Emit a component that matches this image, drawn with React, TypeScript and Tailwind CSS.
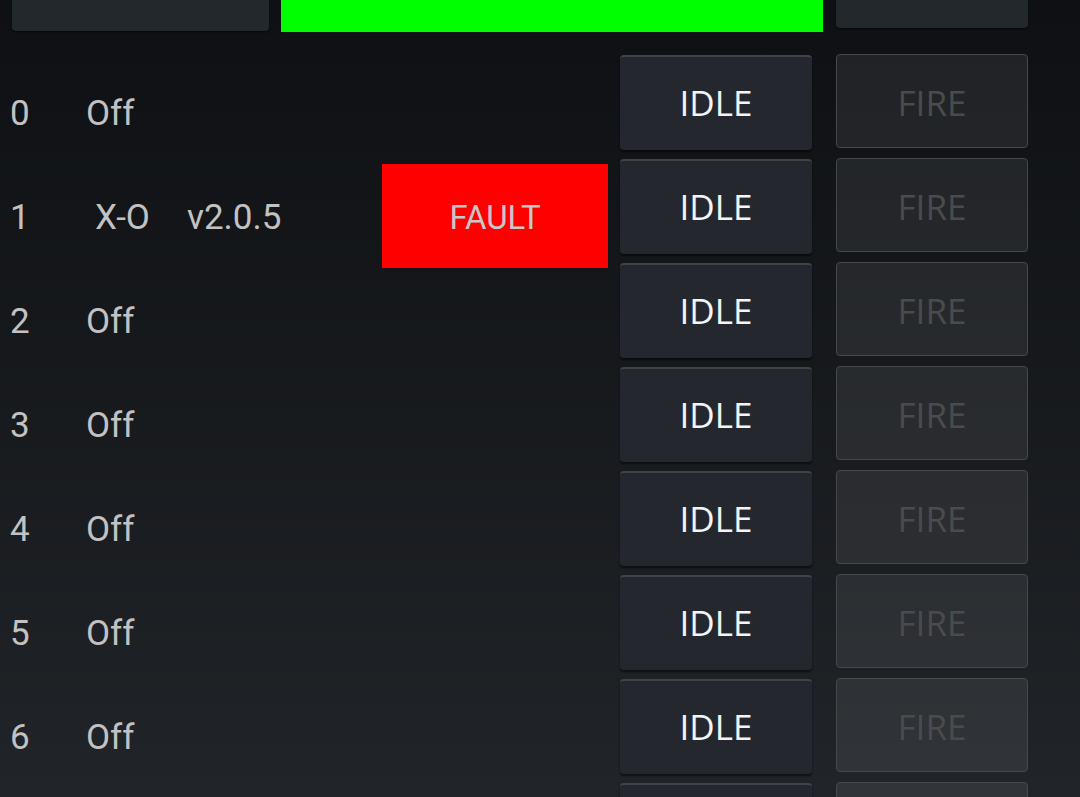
const rows = [
  { id: 0, name: 'Off' },
  { id: 1, name: 'X-O', version: 'v2.0.5', fault: true },
  { id: 2, name: 'Off' },
  { id: 3, name: 'Off' },
  { id: 4, name: 'Off' },
  { id: 5, name: 'Off' },
  { id: 6, name: 'Off' },
  { id: 7, name: 'Off' },
];

export default function App() {
  return (
    <div className="h-[797px] w-[1080px] overflow-hidden bg-gradient-to-b from-[#0e1013] to-[#212428] font-['Roboto',sans-serif]">
      <div className="flex items-start h-[60px]">
        <div className="ml-3 w-[257px] h-[31px] rounded-b-[4px] bg-[#23282d] shadow-[0_1px_2px_rgba(0,0,0,0.6)]" />
        <div className="ml-3 w-[542px] h-[32px] bg-[#00ff00]" />
        <div className="ml-[13px] w-[192px] h-[28px] rounded-b-[4px] bg-[#23282d] shadow-[0_1px_2px_rgba(0,0,0,0.6)]" />
      </div>
      {rows.map(r => (
        <div key={r.id} className="flex items-start h-[104px] shrink-0">
          <div className="w-[86px] h-[104px] pl-[10px] pt-[5px] flex items-center text-[35px] text-[#c2c2c2]">{r.id}</div>
          <div className={`w-[101px] h-[104px] pt-[5px] flex items-center text-[35px] text-[#c2c2c2] ${r.version ? 'pl-[9px]' : ''}`}>{r.name}</div>
          <div className="w-[195px] h-[104px] pt-[5px] flex items-center text-[35px] text-[#c2c2c2]">{r.version}</div>
          <div className="w-[226px] h-[104px]">
            {r.fault && (
              <div className="h-full pt-[3px] bg-[#ff0000] flex items-center justify-center text-[33px] text-[#c8c8c8]">FAULT</div>
            )}
          </div>
          <button className="ml-3 -mt-[5px] w-[192px] h-[95px] rounded-[4px] bg-[#24282e] border-t-2 border-[#3f4449] shadow-[0_2px_2px_rgba(0,0,0,0.55)] flex items-center justify-center font-['Open_Sans',sans-serif] text-[35px] text-[#f4f4f4]">
            IDLE
          </button>
          <button className="ml-6 -mt-[6px] w-[192px] h-[94px] pt-[4px] rounded-[4px] bg-white/[0.075] border border-[#46494c] flex items-center justify-center font-['Open_Sans',sans-serif] text-[35px] text-[#4b4b4b]">
            FIRE
          </button>
        </div>
      ))}
    </div>
  );
}
